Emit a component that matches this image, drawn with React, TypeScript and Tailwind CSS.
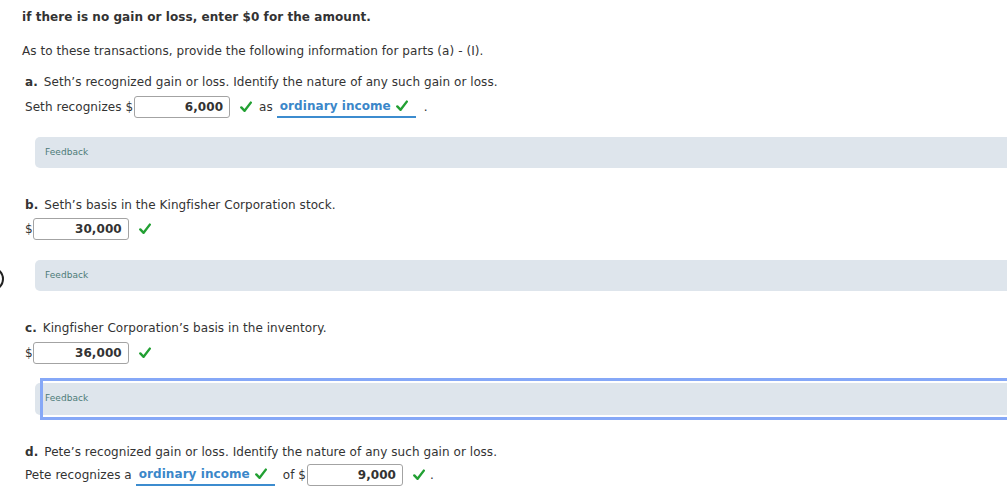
import React from "react";

const font = { fontFamily: '"DejaVu Sans", Verdana, sans-serif' };

function Check() {
  return (
    <svg width="12" height="12" viewBox="0 0 12 12" className="shrink-0">
      <path d="M1.3 6.4 L4.6 9.8 L10.8 1.6" fill="none" stroke="#22a033" strokeWidth="2.4" strokeLinecap="round" strokeLinejoin="round" />
    </svg>
  );
}

function Monto({ valor, className = "" }: { valor: string; className?: string }) {
  return (
    <div className={`flex h-[22px] w-[96px] items-center justify-end rounded-[3px] border border-[#a3a3a3] bg-white pr-[6px] text-[12px] font-bold text-[#333] ${className}`}>
      {valor}
    </div>
  );
}

function Selector({ className = "" }: { className?: string }) {
  return (
    <div className={`flex h-[22px] items-center border-b-2 border-[#3c8ccf] pl-[3px] pr-[8px] ${className}`}>
      <span className="font-bold text-[#3b87c9]">ordinary income</span>
      <span className="ml-[5px]"><Check /></span>
    </div>
  );
}

function Feedback({ foco = false, className = "" }: { foco?: boolean; className?: string }) {
  return (
    <div className={`relative ml-[35px] w-[1000px] rounded-l-[5px] bg-[#dee5ec] ${foco ? "h-[32px]" : "h-[31px]"} ${className}`}>
      {foco && <div className="absolute -top-[5px] -bottom-[5px] left-[5px] right-0 border-[3px] border-r-0 border-[#86a8f7]" />}
      <div className="relative flex h-full items-center pl-[10px] text-[9px] text-[#4d7b78]">Feedback</div>
    </div>
  );
}

function Titulo({ letra, texto, className = "" }: { letra: string; texto: string; className?: string }) {
  return (
    <p className={`ml-[25px] h-[18px] leading-[18px] ${className}`}>
      <span className="font-bold">{letra}</span>
      <span className="ml-[6px]">{texto}</span>
    </p>
  );
}

export default function App() {
  return (
    <div style={font} className="relative h-[502px] w-[1007px] overflow-hidden bg-white text-[12px] tracking-[0.06px] text-[#333]">
      <div className="absolute -left-[20px] top-[267px] h-[24px] w-[24px] rounded-full border-[2.5px] border-[#222]" />

      <p className="ml-[22px] mt-[8px] h-[18px] font-bold leading-[18px]">if there is no gain or loss, enter $0 for the amount.</p>
      <p className="ml-[22px] mt-[16px] h-[18px] leading-[18px]">As to these transactions, provide the following information for parts (a) - (I).</p>

      <Titulo letra="a." texto="Seth’s recognized gain or loss. Identify the nature of any such gain or loss." className="mt-[13px]" />
      <div className="ml-[25px] mt-[5px] flex h-[22px] items-center">
        <span>Seth recognizes $</span>
        <Monto valor="6,000" className="ml-[1px]" />
        <span className="ml-[10px]"><Check /></span>
        <span className="ml-[7px]">as</span>
        <Selector className="ml-[4px]" />
        <span className="ml-[8px]">.</span>
      </div>
      <Feedback className="mt-[19px]" />

      <Titulo letra="b." texto="Seth’s basis in the Kingfisher Corporation stock." className="mt-[28px]" />
      <div className="ml-[25px] mt-[4px] flex h-[22px] items-center">
        <span>$</span>
        <Monto valor="30,000" />
        <span className="ml-[10px]"><Check /></span>
      </div>
      <Feedback className="mt-[20px]" />

      <Titulo letra="c." texto="Kingfisher Corporation’s basis in the inventory." className="mt-[28px]" />
      <div className="ml-[25px] mt-[5px] flex h-[22px] items-center">
        <span>$</span>
        <Monto valor="36,000" />
        <span className="ml-[10px]"><Check /></span>
      </div>
      <Feedback foco className="mt-[19px]" />

      <Titulo letra="d." texto="Pete’s recognized gain or loss. Identify the nature of any such gain or loss." className="mt-[28px]" />
      <div className="ml-[25px] mt-[3px] flex h-[22px] items-center">
        <span>Pete recognizes a</span>
        <Selector className="ml-[4px]" />
        <span className="ml-[8px]">of $</span>
        <Monto valor="9,000" className="ml-[1px]" />
        <span className="ml-[10px]"><Check /></span>
        <span className="ml-[5px]">.</span>
      </div>
    </div>
  );
}
